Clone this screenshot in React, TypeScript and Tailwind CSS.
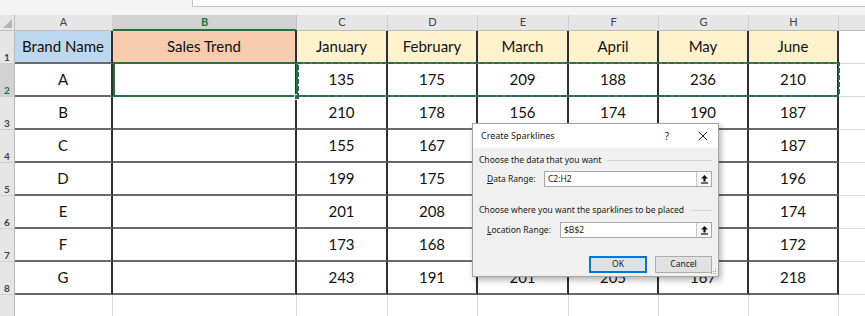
import React from 'react';

const cols = ['A', 'B', 'C', 'D', 'E', 'F', 'G', 'H', 'I'];
const months = ['January', 'February', 'March', 'April', 'May', 'June'];
// values in E4:G7 sit under the dialog and are left blank
const rows = [
  { brand: 'A', v: [135, 175, 209, 188, 236, 210] },
  { brand: 'B', v: [210, 178, 156, 174, 190, 187] },
  { brand: 'C', v: [155, 167, null, null, null, 187] },
  { brand: 'D', v: [199, 175, null, null, null, 196] },
  { brand: 'E', v: [201, 208, null, null, null, 174] },
  { brand: 'F', v: [173, 168, null, null, null, 172] },
  { brand: 'G', v: [243, 191, 201, 205, 167, 218] },
];

const cell =
  'flex items-center justify-center border-r-2 border-b-2 border-r-[#2f2f2f] border-b-[#6a6a6a] text-[15px] text-[#111]';
const empty = 'border-r border-b border-[#dadada] bg-white';

function RowHead({ n, active }: { n?: number; active?: boolean }) {
  return (
    <div
      className={`flex items-end pl-[4px] pb-[1px] border-b border-r border-b-[#cfcfcf] border-r-[#b9b9b9] text-[10px] font-bold leading-none ${
        active ? 'bg-[#d2d2d2] text-[#217346]' : 'bg-[#e6e6e6] text-[#444]'
      }`}
    >
      {n}
    </div>
  );
}

function UpIcon() {
  return (
    <svg width="9" height="10" viewBox="0 0 9 10">
      <path d="M4.5 1 L8 4.6 L5.6 4.6 L5.6 7.4 L3.4 7.4 L3.4 4.6 L1 4.6 Z" fill="#111" />
      <rect x="1" y="8.4" width="7" height="1.2" fill="#111" />
    </svg>
  );
}

export default function App() {
  return (
    <div className="relative w-[865px] h-[316px] overflow-hidden bg-white font-['Lato',sans-serif]">
      {/* formula bar strip */}
      <div className="flex h-[15px] bg-[#f3f3f3]">
        <div className="w-[192px]" />
        <div className="flex-1 h-[7px] bg-white border-l border-b border-[#c6c6c6]" />
      </div>

      <div className="relative">
        <div className="grid w-[900px] grid-cols-[15px_98px_184px_91px_90px_91px_90px_90px_90px_56px] grid-rows-[16px_repeat(9,33px)]">
          {/* column headers */}
          <div className="relative bg-[#e6e6e6] border-r border-b border-[#bdbdbd]">
            <svg className="absolute right-[2px] bottom-[2px]" width="9" height="9" viewBox="0 0 9 9">
              <polygon points="9,0 9,9 0,9" fill="#b4b4b4" />
            </svg>
          </div>
          {cols.map((c) =>
            c === 'B' ? (
              <div
                key={c}
                className="flex items-center justify-center bg-[#d2d2d2] border-r border-r-[#c0c0c0] border-b-2 border-b-[#217346] text-[11px] font-bold text-[#217346]"
              >
                {c}
              </div>
            ) : (
              <div
                key={c}
                className="flex items-center justify-center bg-[#e6e6e6] border-r border-b border-r-[#cfcfcf] border-b-[#bdbdbd] text-[11px] text-[#444]"
              >
                {c}
              </div>
            )
          )}

          {/* row 1 */}
          <RowHead n={1} />
          <div className={`${cell} bg-[#bdd7ee]`}>Brand Name</div>
          <div className={`${cell} bg-[#f8cbad]`}>Sales Trend</div>
          {months.map((m) => (
            <div key={m} className={`${cell} bg-[#fff2cc]`}>
              {m}
            </div>
          ))}
          <div className={empty} />

          {/* rows 2-8 */}
          {rows.map((r, i) => (
            <React.Fragment key={r.brand}>
              <RowHead n={i + 2} active={i === 0} />
              <div className={`${cell} bg-white`}>{r.brand}</div>
              <div className={`${cell} bg-white`} />
              {r.v.map((v, j) => (
                <div key={j} className={`${cell} bg-white`}>
                  {v}
                </div>
              ))}
              <div className={empty} />
            </React.Fragment>
          ))}

          {/* row 9 */}
          <RowHead />
          {cols.map((c) => (
            <div key={c} className={empty} />
          ))}
        </div>

        {/* active cell B2 */}
        <div className="absolute left-[113px] top-[47px] w-[185px] h-[35px] border-2 border-[#217346]" />
        <div className="absolute left-[294px] top-[79px] w-[6px] h-[6px] bg-[#217346] border border-white" />
        {/* copy marquee C2:H2 */}
        <svg className="absolute left-[297px] top-[47px]" width="543" height="35">
          <rect x="1" y="1" width="541" height="33" fill="none" stroke="#217346" strokeWidth="2" strokeDasharray="5 2" />
        </svg>
      </div>

      {/* Create Sparklines dialog */}
      <div className="absolute left-[472px] top-[123px] w-[247px] h-[154px] flex flex-col bg-[#f0f0f0] border border-[#a3a3a3] shadow-[2px_3px_6px_rgba(0,0,0,0.3)] font-['Noto_Sans',sans-serif] text-[8.5px] text-[#1a1a1a]">
        <div className="flex items-center h-[24px] bg-white pl-[8px] pr-[10px]">
          <span className="flex-1 text-[9px]">Create Sparklines</span>
          <span className="w-[10px] text-[10px] text-center mr-[26px]">?</span>
          <svg width="10" height="10" viewBox="0 0 10 10">
            <path d="M1 1 L9 9 M9 1 L1 9" stroke="#222" strokeWidth="1" />
          </svg>
        </div>

        <div className="relative flex-1 px-[6px] pt-[6px]">
          <div className="flex items-center h-[12px]">
            <span>Choose the data that you want</span>
            <div className="flex-1 ml-[6px] h-px bg-[#d7d7d7]" />
          </div>
          <div className="flex items-center h-[16px] mt-[5px] pl-[8px]">
            <span className="w-[57px]">
              <span className="underline">D</span>ata Range:
            </span>
            <div className="flex flex-1 h-[16px] border border-[#a9a9a9] bg-white">
              <span className="flex-1 flex items-center pl-[3px]">C2:H2</span>
              <div className="w-[15px] flex items-center justify-center bg-[#f7f7f7] border-l border-[#c9c9c9]">
                <UpIcon />
              </div>
            </div>
          </div>

          <div className="flex items-center h-[12px] mt-[17px]">
            <span>Choose where you want the sparklines to be placed</span>
            <div className="flex-1 ml-[6px] h-px bg-[#d7d7d7]" />
          </div>
          <div className="flex items-center h-[16px] mt-[6px] pl-[8px]">
            <span className="w-[73px]">
              <span className="underline">L</span>ocation Range:
            </span>
            <div className="flex flex-1 h-[16px] border border-[#a9a9a9] bg-white">
              <span className="flex-1 flex items-center pl-[3px]">$B$2</span>
              <div className="w-[15px] flex items-center justify-center bg-[#f7f7f7] border-l border-[#c9c9c9]">
                <UpIcon />
              </div>
            </div>
          </div>

          <div className="flex justify-end gap-[8px] mt-[18px]">
            <button className="w-[58px] h-[17px] bg-[#e1e1e1] border-2 border-[#0078d7] text-[8.5px] leading-none">
              OK
            </button>
            <button className="w-[57px] h-[17px] bg-[#e1e1e1] border border-[#adadad] text-[8.5px] leading-none">
              Cancel
            </button>
          </div>

          <svg className="absolute right-[1px] bottom-[1px]" width="6" height="6" viewBox="0 0 6 6">
            <rect x="4" y="0" width="1" height="1" fill="#9a9a9a" />
            <rect x="2" y="2" width="1" height="1" fill="#9a9a9a" />
            <rect x="4" y="2" width="1" height="1" fill="#9a9a9a" />
            <rect x="0" y="4" width="1" height="1" fill="#9a9a9a" />
            <rect x="2" y="4" width="1" height="1" fill="#9a9a9a" />
            <rect x="4" y="4" width="1" height="1" fill="#9a9a9a" />
          </svg>
        </div>
      </div>
    </div>
  );
}
